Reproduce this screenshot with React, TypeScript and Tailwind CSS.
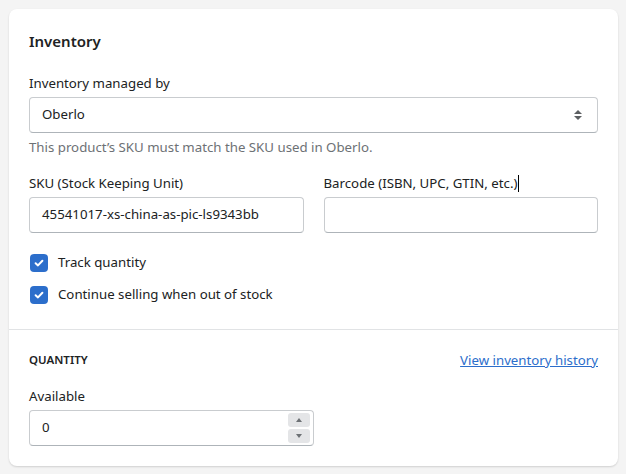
import React from "react";

function Check() {
  return (
    <span className="flex h-[18px] w-[18px] shrink-0 items-center justify-center rounded-[4px] bg-[#2c6ecb]">
      <svg width="12" height="12" viewBox="0 0 12 12" fill="none">
        <path d="M2.6 6.2 L5 8.4 L9.4 3.8" stroke="white" strokeWidth="2" strokeLinecap="round" strokeLinejoin="round" />
      </svg>
    </span>
  );
}

export default function App() {
  return (
    <div
      className="min-h-[474px] w-[626px] bg-[#f4f4f4] pt-[9px] pl-[9px] text-[13.25px] text-[#202223]"
      style={{ fontFamily: '"Noto Sans", "Open Sans", sans-serif' }}
    >
      <div className="w-[609px] rounded-[8px] bg-white shadow-[0_1px_2px_rgba(0,0,0,0.15)]">
        <div className="px-5 pt-5 pb-6">
          <h2 className="text-[15px] leading-6 font-semibold">Inventory</h2>
          <div className="mt-5">
            <div className="leading-5">Inventory managed by</div>
            <div className="mt-1 flex h-9 items-center justify-between rounded-[4px] border border-[#c9cccf] border-b-[#aeb4b9] pl-3 pr-[14px]">
              <span>Oberlo</span>
              <svg width="10" height="14" viewBox="0 0 10 14">
                <path d="M5 2 L9 6 H1 Z" fill="#5c5f62" />
                <path d="M5 12 L9 8 H1 Z" fill="#5c5f62" />
              </svg>
            </div>
            <div className="mt-1 leading-5 text-[#6d7175]">This product’s SKU must match the SKU used in Oberlo.</div>
          </div>
          <div className="mt-4 grid grid-cols-2 gap-5">
            <div>
              <div className="leading-5">SKU (Stock Keeping Unit)</div>
              <div className="mt-1 flex h-9 items-center rounded-[4px] border border-[#c9cccf] border-b-[#aeb4b9] pl-3">
                45541017-xs-china-as-pic-ls9343bb
              </div>
            </div>
            <div>
              <div className="flex items-center leading-5">
                Barcode (ISBN, UPC, GTIN, etc.)
                <span className="ml-[1px] inline-block h-[17px] w-[1px] bg-black" />
              </div>
              <div className="mt-1 h-9 rounded-[4px] border border-[#c9cccf] border-b-[#aeb4b9]" />
            </div>
          </div>
          <div className="mt-5 flex flex-col gap-3">
            <label className="flex h-5 items-center gap-[10px] pl-[1px]">
              <Check />
              Track quantity
            </label>
            <label className="flex h-5 items-center gap-[10px] pl-[1px]">
              <Check />
              Continue selling when out of stock
            </label>
          </div>
        </div>
        <div className="border-t border-[#e1e3e5] px-5 pt-5 pb-5">
          <div className="flex items-center justify-between leading-5">
            <span className="text-[11.5px] font-semibold">QUANTITY</span>
            <a className="text-[#2c6ecb] underline">View inventory history</a>
          </div>
          <div className="mt-4 leading-5">Available</div>
          <div className="mt-1 flex h-9 w-[285px] items-center justify-between rounded-[4px] border border-[#c9cccf] border-b-[#aeb4b9] pl-3 pr-[3px]">
            <span>0</span>
            <div className="flex flex-col gap-[2px]">
              <span className="flex h-[14px] w-[22px] items-center justify-center rounded-[3px] bg-[#e4e5e7]">
                <svg width="6" height="4" viewBox="0 0 6 4"><path d="M3 0 L6 4 H0 Z" fill="#6d7175" /></svg>
              </span>
              <span className="flex h-[14px] w-[22px] items-center justify-center rounded-[3px] bg-[#e4e5e7]">
                <svg width="6" height="4" viewBox="0 0 6 4"><path d="M3 4 L6 0 H0 Z" fill="#6d7175" /></svg>
              </span>
            </div>
          </div>
        </div>
      </div>
    </div>
  );
}
